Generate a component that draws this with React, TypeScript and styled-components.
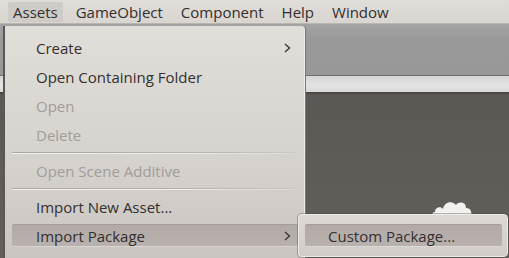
import React from "react";
import styled, { createGlobalStyle } from "styled-components";

const GlobalStyle = createGlobalStyle`
  html, body {
    margin: 0;
    padding: 0;
    background: #5e5a56;
  }
  * {
    box-sizing: border-box;
  }
`;

const Page = styled.div`
  width: 509px;
  height: 258px;
  overflow: hidden;
  display: flex;
  flex-direction: column;
  font-family: "Open Sans", "Noto Sans", sans-serif;
  font-size: 15px;
  color: #33302d;
`;

const MenuBar = styled.div`
  height: 24px;
  flex: none;
  display: flex;
  align-items: stretch;
  gap: 8px;
  padding: 2px 0 1px 8px;
  background: linear-gradient(#e0dcd8, #d9d5d1);
  border-bottom: 1px solid #b9b5b1;
`;

const MenuTitle = styled.div<{ $open?: boolean }>`
  display: flex;
  align-items: center;
  padding: 0 5px;
  border-radius: 2px;
  background: ${(p) => (p.$open ? "#cfcbc7" : "transparent")};
  white-space: nowrap;
`;

const Content = styled.div`
  flex: 1;
  position: relative;
  display: flex;
  flex-direction: column;
`;

const TopPanel = styled.div`
  height: 52px;
  background: linear-gradient(#a3a3a3, #999999 30%, #989898);
  border-bottom: 1px solid #6f6f6f;
`;

const Strip = styled.div`
  height: 18px;
  background: linear-gradient(#d6d6d6, #e4e4e4 60%, #d8d8d8);
  border-bottom: 2px solid #4a4744;
`;

const Viewport = styled.div`
  flex: 1;
  background: linear-gradient(#5c5855, #625e5a);
`;

const Cloud = styled.svg`
  position: absolute;
  left: 430px;
  top: 170px;
`;

const Dropdown = styled.div`
  position: absolute;
  left: 3px;
  top: 2px;
  width: 302px;
  height: 240px;
  padding-top: 7px;
  background: linear-gradient(#e1ddd9, #d6d2ce 55%, #c9c4c0);
  border-left: 2px solid #5a5754;
  border-right: 1px solid #eeebe8;
  border-top-right-radius: 4px;
  box-shadow: 1px 0 0 #7b7773;
`;

const Row = styled.div<{ $disabled?: boolean }>`
  height: 29px;
  padding: 3px 6px 3px 7px;
  color: ${(p) => (p.$disabled ? "#a19d99" : "#33302d")};
`;

const RowInner = styled.div<{ $active?: boolean }>`
  height: 23px;
  display: flex;
  align-items: center;
  justify-content: space-between;
  padding: 0 7px 0 24px;
  border-radius: 2px;
  background: ${(p) => (p.$active ? "linear-gradient(#b2aaa7, #b9b1ae)" : "transparent")};
  border-top: 1px solid ${(p) => (p.$active ? "#a49c99" : "transparent")};
  border-bottom: 1px solid ${(p) => (p.$active ? "#d9d5d2" : "transparent")};
  white-space: nowrap;
`;

const Separator = styled.div`
  height: 7px;
  margin: 0 8px 0 7px;
  display: flex;
  flex-direction: column;
  justify-content: center;
  &::before {
    content: "";
    display: block;
    height: 1px;
    background: linear-gradient(90deg, #aaa6a3, #b8b4b0 70%, rgba(184, 180, 176, 0.3));
  }
  &::after {
    content: "";
    display: block;
    height: 1px;
    background: linear-gradient(90deg, #f4f2f0, #ebe8e5 70%, rgba(235, 232, 229, 0.3));
  }
`;

const Submenu = styled.div`
  position: absolute;
  left: 298px;
  top: 190px;
  width: 210px;
  height: 43px;
  padding: 9px 5px 0 6px;
  background: linear-gradient(#dcd8d4, #d1ccc8);
  border: 1px solid #ece9e6;
  border-radius: 4px;
  box-shadow: 0 0 0 1px rgba(70, 66, 62, 0.35);
`;

const SubItem = styled.div`
  height: 23px;
  display: flex;
  align-items: center;
  padding-left: 23px;
  border-radius: 2px;
  background: linear-gradient(#b2aaa7, #b9b1ae);
  border-top: 1px solid #a49c99;
  border-bottom: 1px solid #dcd8d5;
  white-space: nowrap;
`;

const Chevron = () => (
  <svg width="7" height="10" viewBox="0 0 7 10">
    <polyline points="1,1 5.5,5 1,9" fill="none" stroke="#3b3835" strokeWidth="1.4" />
  </svg>
);

type Item =
  | { kind: "item"; label: string; disabled?: boolean; sub?: boolean; active?: boolean }
  | { kind: "sep" };

const items: Item[] = [
  { kind: "item", label: "Create", sub: true },
  { kind: "item", label: "Open Containing Folder" },
  { kind: "item", label: "Open", disabled: true },
  { kind: "item", label: "Delete", disabled: true },
  { kind: "sep" },
  { kind: "item", label: "Open Scene Additive", disabled: true },
  { kind: "sep" },
  { kind: "item", label: "Import New Asset..." },
  { kind: "item", label: "Import Package", sub: true, active: true },
];

export default function App() {
  return (
    <Page>
      <GlobalStyle />
      <MenuBar>
        <MenuTitle $open>Assets</MenuTitle>
        <MenuTitle>GameObject</MenuTitle>
        <MenuTitle>Component</MenuTitle>
        <MenuTitle>Help</MenuTitle>
        <MenuTitle>Window</MenuTitle>
      </MenuBar>
      <Content>
        <TopPanel />
        <Strip />
        <Viewport />
        <Cloud width="44" height="26" viewBox="0 0 44 26">
          <path
            d="M4 24 C1 24 1 18 5 18 C5 13 11 12 13 15 C14 8 22 6 26 11 C29 7 36 8 36 14 C41 14 43 19 40 24 Z"
            fill="#f2f1ef"
          />
          <path d="M6 22 C14 20 30 20 40 22" stroke="#d8d6d3" strokeWidth="2" fill="none" />
        </Cloud>
        <Dropdown>
          {items.map((it, i) =>
            it.kind === "sep" ? (
              <Separator key={i} />
            ) : (
              <Row key={i} $disabled={it.disabled}>
                <RowInner $active={it.active}>
                  <span>{it.label}</span>
                  {it.sub && <Chevron />}
                </RowInner>
              </Row>
            )
          )}
        </Dropdown>
        <Submenu>
          <SubItem>Custom Package...</SubItem>
        </Submenu>
      </Content>
    </Page>
  );
}
